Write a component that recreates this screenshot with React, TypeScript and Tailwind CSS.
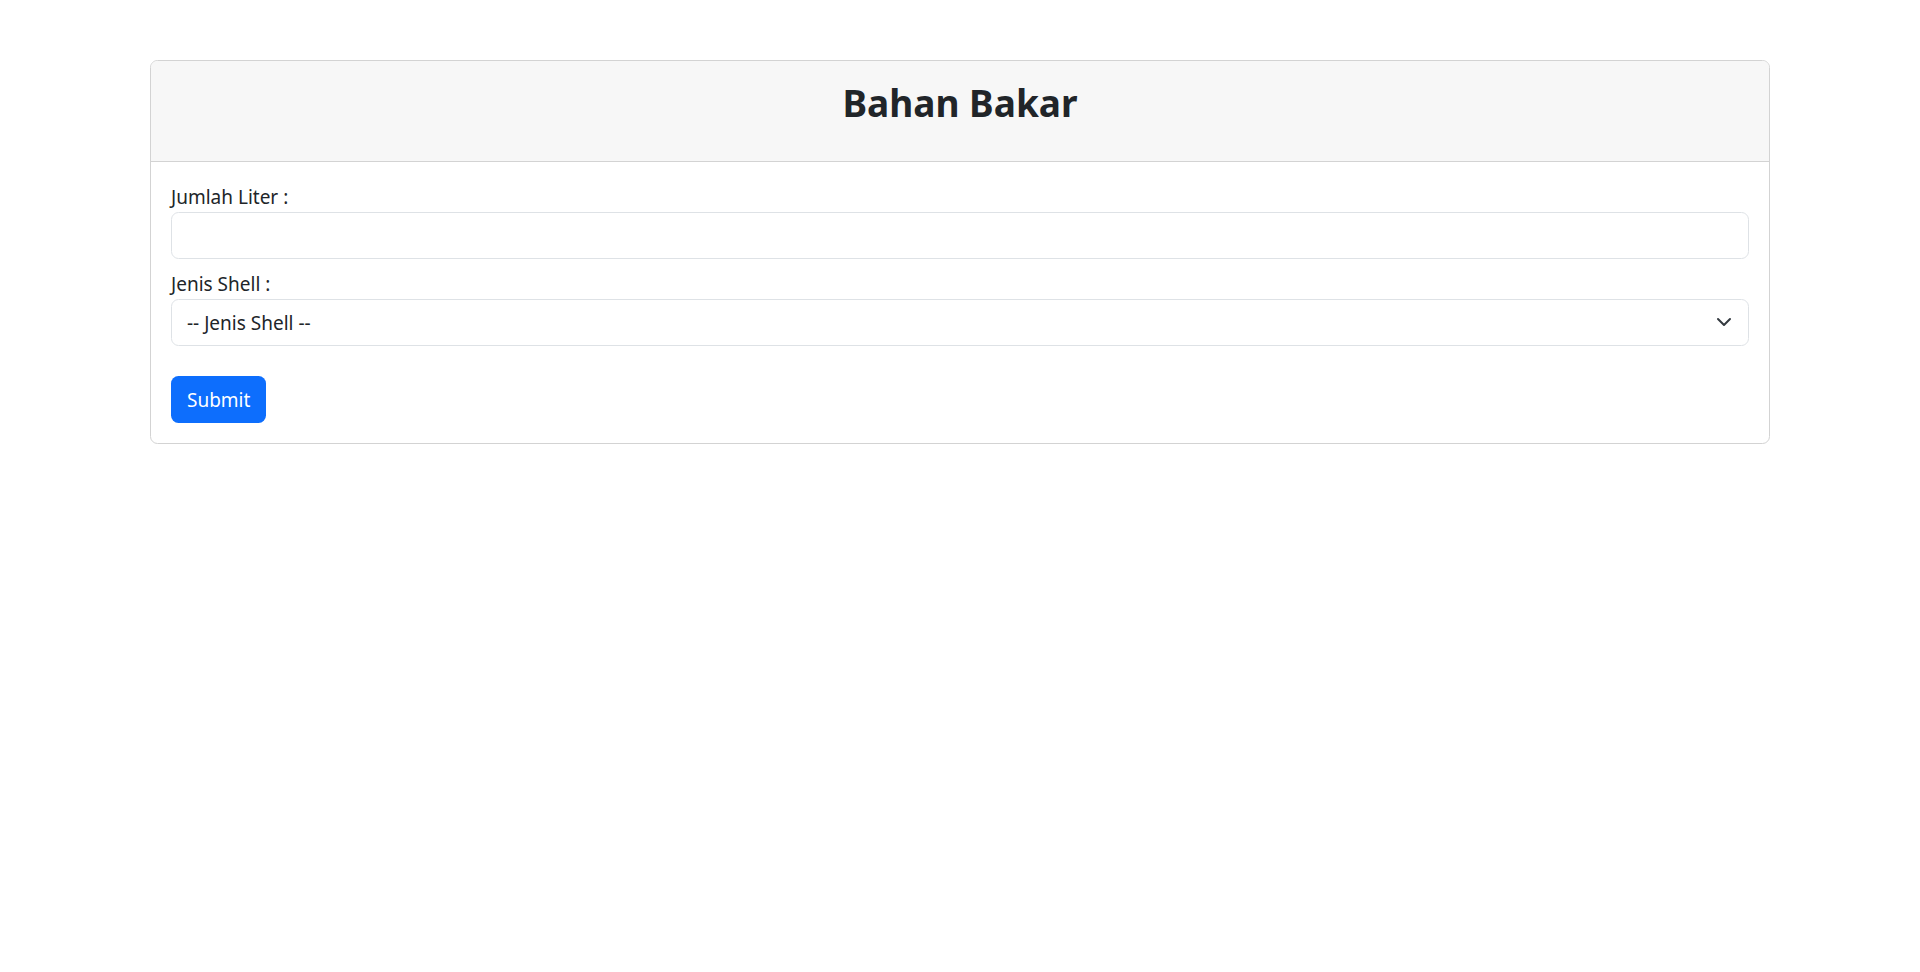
export default function App() {
  return (
    <div className="min-h-screen bg-white pt-[60px] font-['Noto_Sans',sans-serif] text-[#212529]">
      <div className="mx-auto w-[1620px] overflow-hidden rounded-[7.5px] border border-[#d3d3d3]">
        {/* header */}
        <div className="border-b border-[#d3d3d3] bg-[#f7f7f7] px-5 pt-[18px] pb-[24px]">
          <h2 className="mb-[10px] text-center text-[37px] font-bold leading-[48px]">Bahan Bakar</h2>
        </div>

        {/* body */}
        <form className="p-5 text-[19px] leading-[30px]">
          <label className="block">Jumlah Liter :</label>
          <input
            type="text"
            className="mb-[10px] block h-[47px] w-full rounded-[7.5px] border border-[#dee2e6] px-[15px] outline-none"
          />

          <label className="block">Jenis Shell :</label>
          <div className="relative mb-[10px]">
            <select className="block h-[47px] w-full appearance-none rounded-[7.5px] border border-[#dee2e6] bg-white px-[15px] outline-none">
              <option>-- Jenis Shell --</option>
            </select>
            <svg
              className="pointer-events-none absolute right-[17px] top-[15px] h-4 w-4"
              viewBox="0 0 16 16"
              fill="none"
              stroke="#343a40"
              strokeWidth="2"
              strokeLinecap="round"
              strokeLinejoin="round"
            >
              <path d="m2 5 6 6 6-6" />
            </svg>
          </div>

          <button
            type="button"
            className="mt-5 h-[47px] rounded-[7.5px] bg-[#0d6efd] px-[16px] text-white"
          >
            Submit
          </button>
        </form>
      </div>
    </div>
  );
}
